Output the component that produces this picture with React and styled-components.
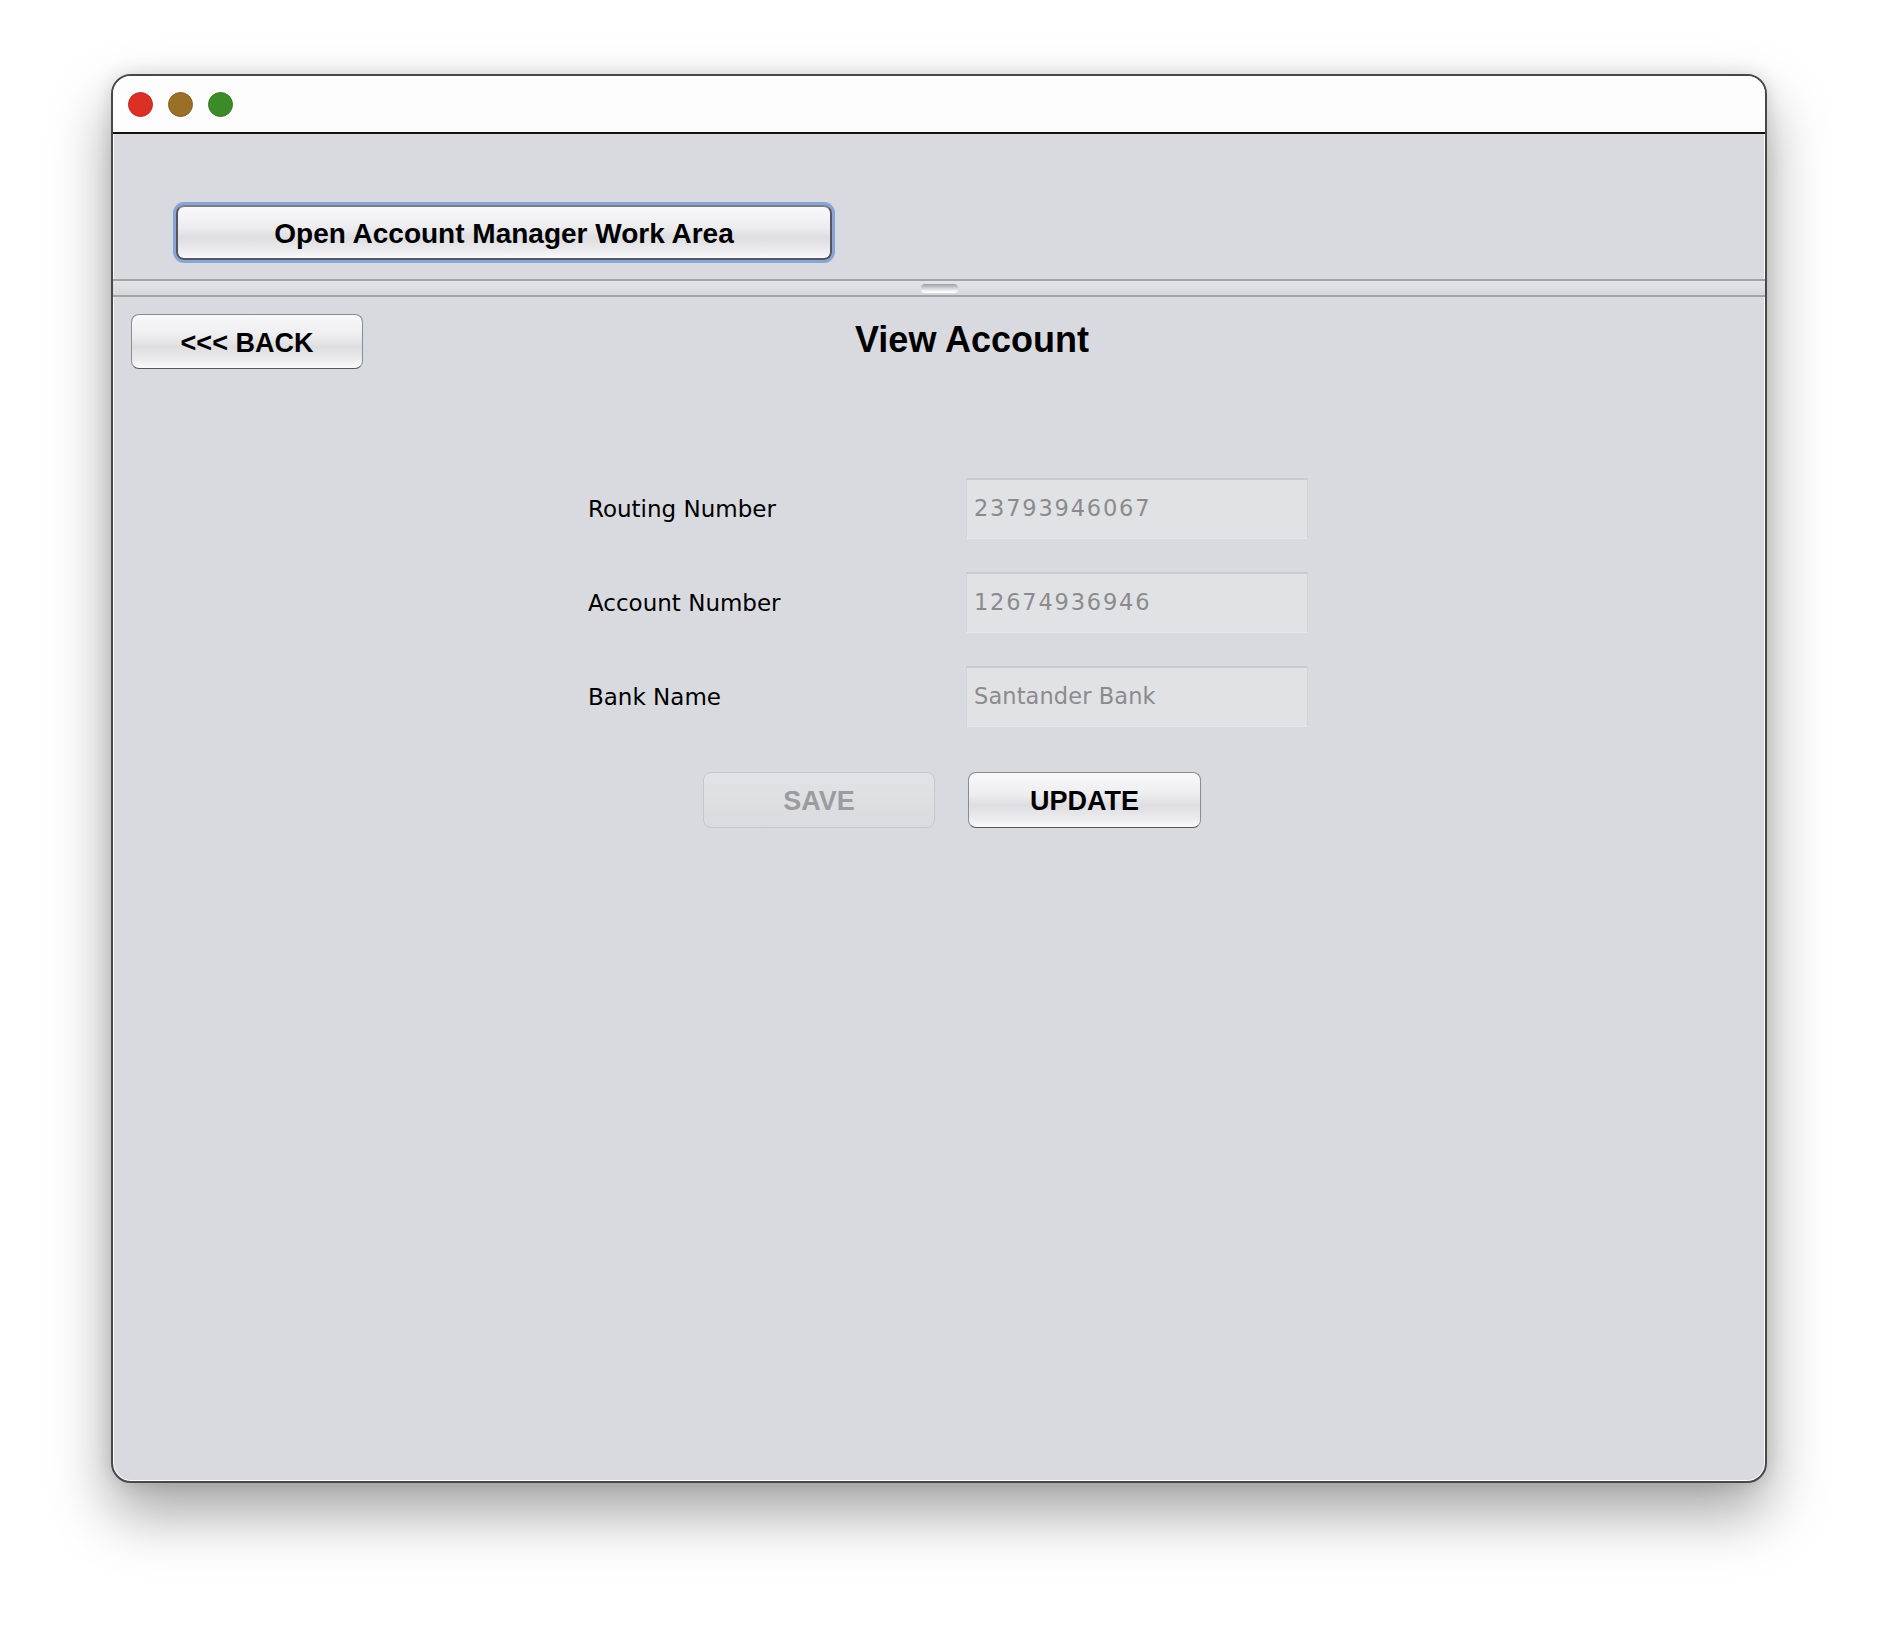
import React from "react";
import styled, { createGlobalStyle, css } from "styled-components";

const GlobalStyle = createGlobalStyle`
  html, body { margin: 0; padding: 0; background: #ffffff; }
  body { font-family: "Liberation Sans", Arial, sans-serif; }
`;

const Page = styled.div`
  padding: 74px 0 147px 111px;
  width: 1878px;
  box-sizing: border-box;
`;

const Window = styled.div`
  width: 1656px;
  height: 1409px;
  box-sizing: border-box;
  border: 2px solid #484848;
  border-radius: 20px;
  overflow: hidden;
  background: #d9dadf;
  display: flex;
  flex-direction: column;
  box-shadow: 0 30px 60px rgba(0, 0, 0, 0.36), 0 0 18px rgba(0, 0, 0, 0.12),
    inset 0 0 0 1px #ffffff;
`;

const TitleBar = styled.div`
  height: 56px;
  flex: none;
  background: #fdfdfd;
  border-bottom: 2px solid #111111;
  display: flex;
  align-items: center;
  padding-left: 15px;
  gap: 15px;
`;

const Light = styled.span`
  width: 23px;
  height: 23px;
  border-radius: 50%;
  background: ${(p) => p.$color};
  border: 1px solid ${(p) => p.$edge};
`;

const TopPane = styled.div`
  height: 145px;
  flex: none;
  box-sizing: border-box;
  padding: 71px 0 0 63px;
`;

const Divider = styled.div`
  height: 18px;
  flex: none;
  box-sizing: border-box;
  border-top: 2px solid #a2a3a7;
  border-bottom: 2px solid #a2a3a7;
  background: linear-gradient(#e4e5e9, #d6d7dc);
  display: flex;
  justify-content: center;
  align-items: center;
`;

const Grip = styled.span`
  width: 37px;
  height: 8px;
  border-radius: 5px;
  background: linear-gradient(#9fa0a6, #d8d9de 60%, #ffffff);
  box-shadow: 0 1px 0 #ffffff;
`;

const BottomPane = styled.div`
  flex: 1;
  padding: 17px 0 0 18px;
  display: flex;
  flex-direction: column;
`;

const Header = styled.div`
  display: flex;
  align-items: center;
`;

const buttonBase = css`
  box-sizing: border-box;
  font-family: "Liberation Sans", Arial, Helvetica, sans-serif;
  font-weight: bold;
  color: #000000;
  border-radius: 8px;
  display: flex;
  align-items: center;
  justify-content: center;
  padding: 3px 0 0;
  cursor: default;
`;

const AquaButton = styled.button`
  ${buttonBase};
  width: ${(p) => p.$w}px;
  height: ${(p) => p.$h}px;
  font-size: ${(p) => p.$size || 27}px;
  border: 1.5px solid #8b8c91;
  border-bottom-color: #55565a;
  background: linear-gradient(
    #f9f9fb 0%,
    #ededf0 40%,
    #dedee2 60%,
    #ececef 85%,
    #fbfbfd 100%
  );
  ${(p) =>
    p.$focused &&
    css`
      border: 2px solid #56575b;
      border-top-color: #7d7e83;
      box-shadow: 0 0 0 3px #86a7d6;
    `}
  ${(p) =>
    p.disabled &&
    css`
      color: #9b9c9f;
      border: 1.5px solid #c6c7cb;
      background: linear-gradient(#e2e3e7, #dadbdf);
    `}
`;

const Title = styled.h1`
  margin: 0 0 4px 492px;
  font-family: "Liberation Sans", Arial, Helvetica, sans-serif;
  font-weight: bold;
  font-size: 36px;
  color: #000000;
`;

const Form = styled.div`
  margin: 109px 0 0 457px;
  display: grid;
  grid-template-columns: 378px 342px;
  grid-auto-rows: 61px;
  row-gap: 33px;
  align-items: center;
`;

const Label = styled.label`
  font-family: "DejaVu Sans", "Noto Sans", sans-serif;
  font-size: 23px;
  color: #000000;
`;

const Field = styled.div`
  height: 61px;
  box-sizing: border-box;
  background: #e1e2e6;
  border-top: 2px solid #cacbcf;
  border-left: 1px solid #d3d4d8;
  border-right: 1px solid #d3d4d8;
  border-bottom: 1px solid #e6e7eb;
  display: flex;
  align-items: center;
  padding: 0 0 2px 7px;
  font-family: "DejaVu Sans", "Noto Sans", sans-serif;
  font-size: 22.5px;
  color: #8b8b8d;
  letter-spacing: ${(p) => (p.$numeric ? "1.8px" : "0.1px")};
`;

const ButtonRow = styled.div`
  margin: 45px 0 0 572px;
  display: flex;
  gap: 33px;
`;

const rows = [
  { label: "Routing Number", value: "23793946067", numeric: true },
  { label: "Account Number", value: "12674936946", numeric: true },
  { label: "Bank Name", value: "Santander Bank", numeric: false },
];

export default function App() {
  return (
    <>
      <GlobalStyle />
      <Page>
        <Window>
          <TitleBar>
            <Light $color="#dd3025" $edge="#c2281f" />
            <Light $color="#9a7027" $edge="#85601f" />
            <Light $color="#3d8b28" $edge="#347a22" />
          </TitleBar>
          <TopPane>
            <AquaButton $w={656} $h={55} $size={28} $focused>
              Open Account Manager Work Area
            </AquaButton>
          </TopPane>
          <Divider>
            <Grip />
          </Divider>
          <BottomPane>
            <Header>
              <AquaButton $w={232} $h={55}>&lt;&lt;&lt; BACK</AquaButton>
              <Title>View Account</Title>
            </Header>
            <Form>
              {rows.map((r) => (
                <React.Fragment key={r.label}>
                  <Label>{r.label}</Label>
                  <Field $numeric={r.numeric}>{r.value}</Field>
                </React.Fragment>
              ))}
            </Form>
            <ButtonRow>
              <AquaButton $w={232} $h={56} disabled>
                SAVE
              </AquaButton>
              <AquaButton $w={233} $h={56}>UPDATE</AquaButton>
            </ButtonRow>
          </BottomPane>
        </Window>
      </Page>
    </>
  );
}
